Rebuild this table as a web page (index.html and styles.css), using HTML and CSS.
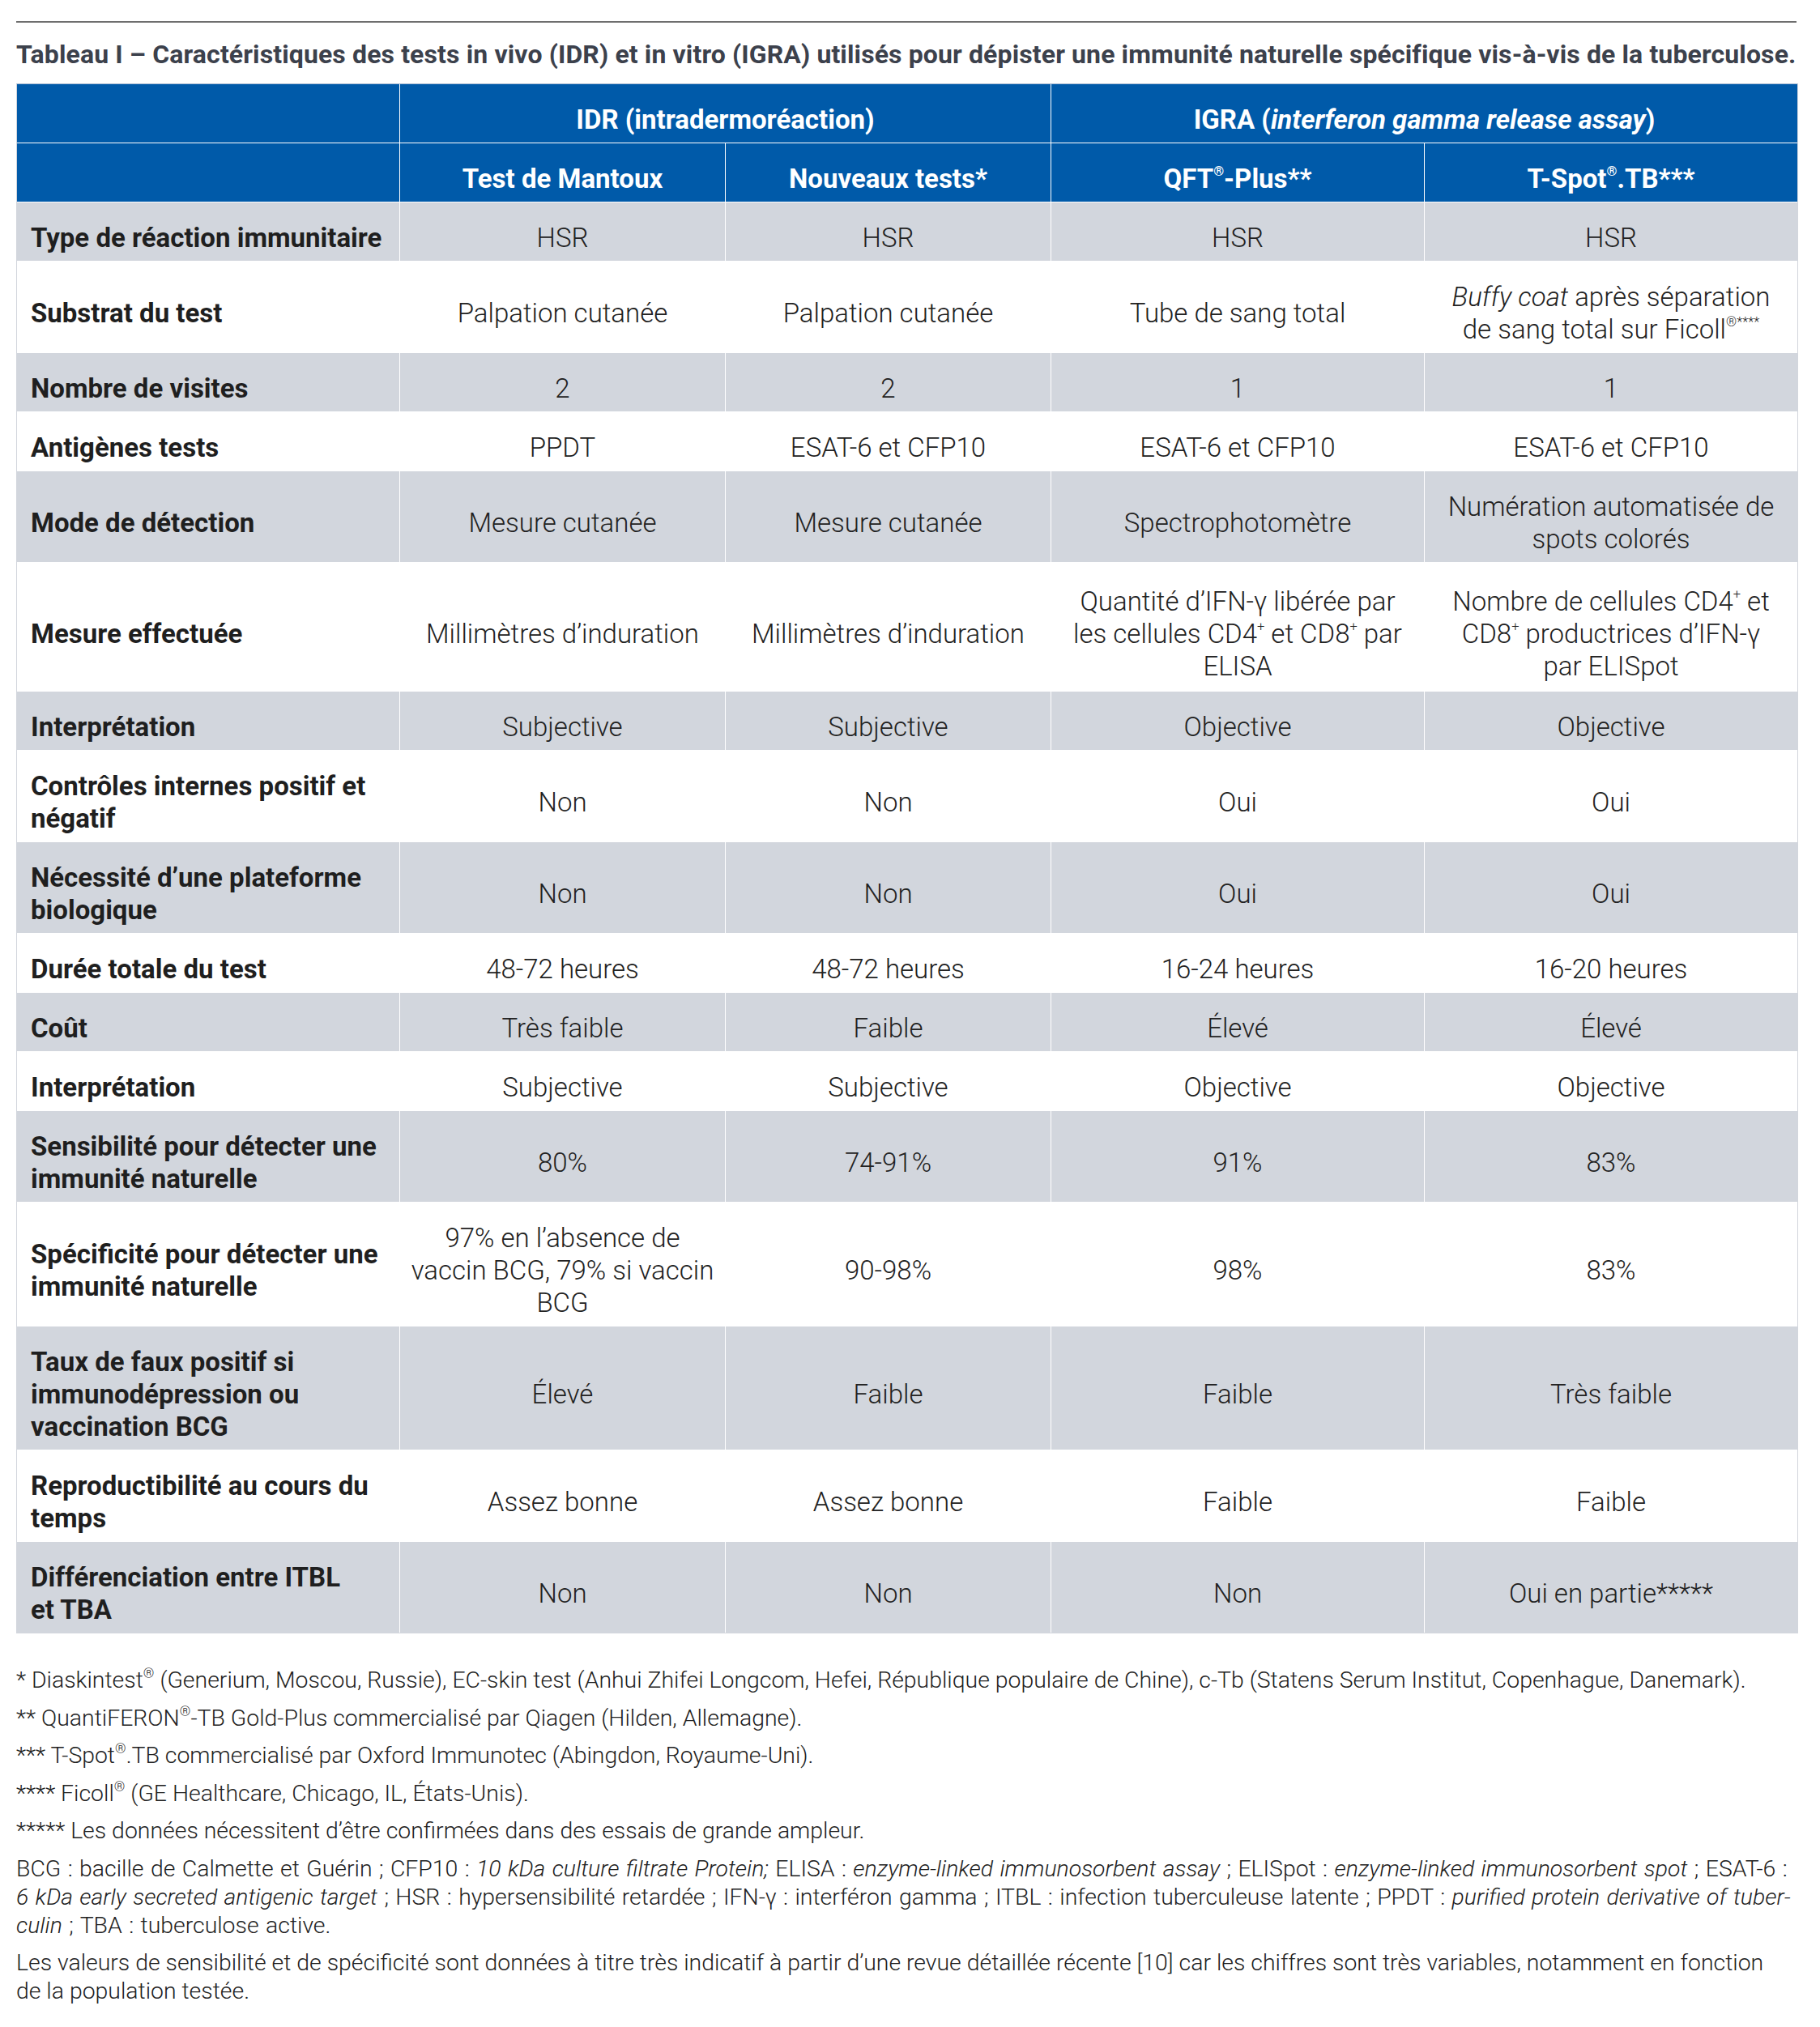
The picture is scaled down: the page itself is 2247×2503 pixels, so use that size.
FILE: index.html
```html
<!DOCTYPE html>
<html lang="fr">
<head>
  <meta charset="UTF-8">
  <title>Tableau I – Tests IDR et IGRA</title>
  <link rel="stylesheet" href="styles.css">
</head>
<body>
  <div class="page">
    <div class="rule"></div>
    <h1 class="title">Tableau I – Caractéristiques des tests in vivo (IDR) et in vitro (IGRA) utilisés pour dépister une immunité naturelle spécifique vis-à-vis de la tuberculose.</h1>

    <table class="grid">
      <colgroup>
        <col class="c-label">
        <col class="c-idr">
        <col class="c-idr">
        <col class="c-igra">
        <col class="c-igra">
      </colgroup>
      <thead>
        <tr>
          <th></th>
          <th colspan="2">IDR (intradermoréaction)</th>
          <th colspan="2">IGRA (<i>interferon gamma release assay</i>)</th>
        </tr>
        <tr>
          <th></th>
          <th>Test de Mantoux</th>
          <th>Nouveaux tests*</th>
          <th>QFT<sup>®</sup>-Plus**</th>
          <th>T-Spot<sup>®</sup>.TB***</th>
        </tr>
      </thead>
      <tbody>
        <tr>
          <td>Type de réaction immunitaire</td>
          <td>HSR</td><td>HSR</td><td>HSR</td><td>HSR</td>
        </tr>
        <tr>
          <td>Substrat du test</td>
          <td>Palpation cutanée</td><td>Palpation cutanée</td><td>Tube de sang total</td>
          <td><i>Buffy coat</i> après séparation<br>de sang total sur Ficoll<sup>®****</sup></td>
        </tr>
        <tr>
          <td>Nombre de visites</td>
          <td>2</td><td>2</td><td>1</td><td>1</td>
        </tr>
        <tr>
          <td>Antigènes tests</td>
          <td>PPDT</td><td>ESAT-6 et CFP10</td><td>ESAT-6 et CFP10</td><td>ESAT-6 et CFP10</td>
        </tr>
        <tr>
          <td>Mode de détection</td>
          <td>Mesure cutanée</td><td>Mesure cutanée</td><td>Spectrophotomètre</td>
          <td>Numération automatisée de<br>spots colorés</td>
        </tr>
        <tr class="tall">
          <td>Mesure effectuée</td>
          <td>Millimètres d’induration</td><td>Millimètres d’induration</td>
          <td>Quantité d’IFN-γ libérée par<br>les cellules CD4<sup>+</sup> et CD8<sup>+</sup> par<br>ELISA</td>
          <td>Nombre de cellules CD4<sup>+</sup> et<br>CD8<sup>+</sup> productrices d’IFN-γ<br>par ELISpot</td>
        </tr>
        <tr>
          <td>Interprétation</td>
          <td>Subjective</td><td>Subjective</td><td>Objective</td><td>Objective</td>
        </tr>
        <tr>
          <td>Contrôles internes positif et<br>négatif</td>
          <td>Non</td><td>Non</td><td>Oui</td><td>Oui</td>
        </tr>
        <tr>
          <td>Nécessité d’une plateforme<br>biologique</td>
          <td>Non</td><td>Non</td><td>Oui</td><td>Oui</td>
        </tr>
        <tr>
          <td>Durée totale du test</td>
          <td>48-72 heures</td><td>48-72 heures</td><td>16-24 heures</td><td>16-20 heures</td>
        </tr>
        <tr>
          <td>Coût</td>
          <td>Très faible</td><td>Faible</td><td>Élevé</td><td>Élevé</td>
        </tr>
        <tr>
          <td>Interprétation</td>
          <td>Subjective</td><td>Subjective</td><td>Objective</td><td>Objective</td>
        </tr>
        <tr>
          <td>Sensibilité pour détecter une<br>immunité naturelle</td>
          <td>80%</td><td>74-91%</td><td>91%</td><td>83%</td>
        </tr>
        <tr>
          <td>Spécificité pour détecter une<br>immunité naturelle</td>
          <td>97% en l’absence de<br>vaccin BCG, 79% si vaccin<br>BCG</td>
          <td>90-98%</td><td>98%</td><td>83%</td>
        </tr>
        <tr>
          <td>Taux de faux positif si<br>immunodépression ou<br>vaccination BCG</td>
          <td>Élevé</td><td>Faible</td><td>Faible</td><td>Très faible</td>
        </tr>
        <tr>
          <td>Reproductibilité au cours du<br>temps</td>
          <td>Assez bonne</td><td>Assez bonne</td><td>Faible</td><td>Faible</td>
        </tr>
        <tr>
          <td>Différenciation entre ITBL<br>et TBA</td>
          <td>Non</td><td>Non</td><td>Non</td><td>Oui en partie*****</td>
        </tr>
      </tbody>
    </table>

    <div class="notes">
      <p>* Diaskintest<sup>®</sup> (Generium, Moscou, Russie), EC-skin test (Anhui Zhifei Longcom, Hefei, République populaire de Chine), c-Tb (Statens Serum Institut, Copenhague, Danemark).</p>
      <p>** QuantiFERON<sup>®</sup>-TB Gold-Plus commercialisé par Qiagen (Hilden, Allemagne).</p>
      <p>*** T-Spot<sup>®</sup>.TB commercialisé par Oxford Immunotec (Abingdon, Royaume-Uni).</p>
      <p>**** Ficoll<sup>®</sup> (GE Healthcare, Chicago, IL, États-Unis).</p>
      <p>***** Les données nécessitent d’être confirmées dans des essais de grande ampleur.</p>
      <p class="abbr">BCG : bacille de Calmette et Guérin ; CFP10 : <i>10 kDa culture filtrate Protein;</i> ELISA : <i>enzyme-linked immunosorbent assay</i> ; ELISpot : <i>enzyme-linked immunosorbent spot</i> ; ESAT-6 :<br><i>6 kDa early secreted antigenic target</i> ; HSR : hypersensibilité retardée ; IFN-γ : interféron gamma ; ITBL : infection tuberculeuse latente ; PPDT : <i>purified protein derivative of tuber-<br>culin</i> ; TBA : tuberculose active.</p>
      <p>Les valeurs de sensibilité et de spécificité sont données à titre très indicatif à partir d’une revue détaillée récente [10] car les chiffres sont très variables, notamment en fonction<br>de la population testée.</p>
    </div>
  </div>
</body>
</html>
```

FILE: styles.css
```css
body { margin:0; background:#fff; font-family: Roboto, "Liberation Sans", sans-serif; color:#222; }
.page { width:2198px; padding:26px 0 40px 20px; }

.rule { border-top:2px solid #6e6e6e; }
.title {
  margin:19px 0 16px; font-size:32px; line-height:40px;
  font-weight:700; color:#3c414c; letter-spacing:0.12px; white-space:nowrap;
}

.grid {
  width:2198px; table-layout:fixed;
  border-collapse:separate; border-spacing:0;
  border:1px solid #d2d6dd; border-top-color:#a9bcd3;
  font-size:33px; line-height:40px;
}
.c-label { width:472px; }
.c-idr { width:402px; }
.c-igra { width:461px; }

.grid th, .grid td {
  padding:24px 12px 8px; text-align:center; vertical-align:middle;
  border-left:1px solid #fff; border-top:1px solid #fff;
}
.grid tr > :first-child { border-left:none; text-align:left; padding-left:17px; }
.grid thead tr:first-child th { border-top:none; }
.grid tr.tall td { padding-top:28px; padding-bottom:10px; }

.grid th { background:#005aa9; color:#fff; font-weight:700; }
.grid td { font-weight:300; color:#222; }
.grid td:first-child { font-weight:700; color:#1f1f1f; }
.grid tbody tr:nth-child(odd) td { background:#d2d6dd; }

sup { font-size:0.5em; line-height:0; vertical-align:0.9em; }

.notes { margin-top:40px; font-size:28.4px; line-height:35px; font-weight:300; color:#222; }
.notes p { margin:0 0 11.5px; }
.notes .abbr { word-spacing:1.5px; }
.notes sup { font-size:0.6em; vertical-align:0.7em; }
```
